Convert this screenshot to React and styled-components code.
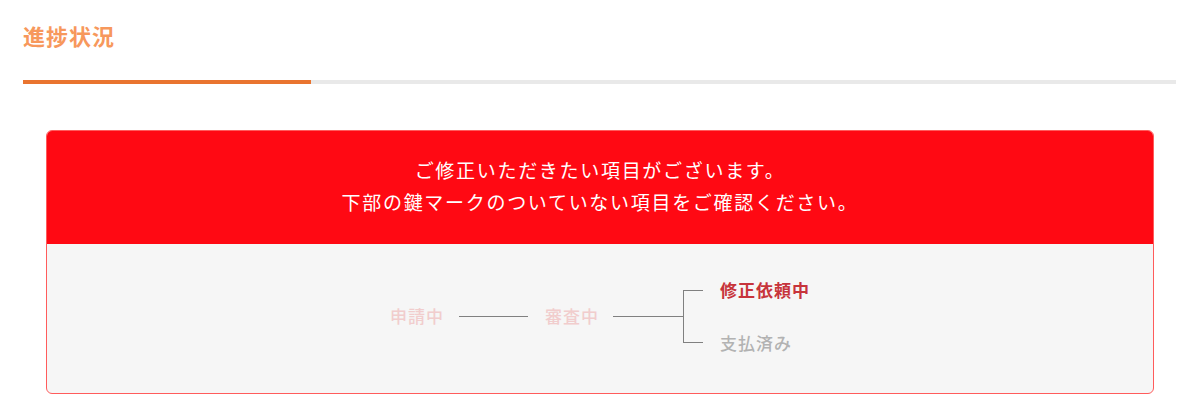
import React from 'react';
import styled, { createGlobalStyle } from 'styled-components';

const GlobalStyle = createGlobalStyle`
  html, body {
    margin: 0;
    padding: 0;
    background: #fff;
    font-family: "Noto Sans CJK JP", "Noto Sans", sans-serif;
  }
`;

const Page = styled.div`
  padding: 20px 24px 12px 23px;
`;

const Title = styled.h2`
  margin: 0;
  font-size: 22px;
  line-height: 30px;
  font-weight: 700;
  letter-spacing: 1px;
  color: #f7985c;
`;

const Track = styled.div`
  margin-top: 30px;
  height: 4px;
  background: #e9e9e9;
`;

const Fill = styled.div`
  height: 100%;
  background: #e9742f;
`;

const Card = styled.section`
  margin: 46px 22px 0 23px;
  border: 1px solid #ff5c5c;
  border-radius: 6px;
  overflow: hidden;
  background: #f6f6f6;
`;

const Alert = styled.div`
  background: #ff0913;
  color: #fff;
  text-align: center;
  padding: 23px 0 26px;
  font-size: 19px;
  line-height: 32px;
  letter-spacing: 1.7px;
`;

const Flow = styled.div`
  height: 149px;
  display: flex;
  align-items: center;
  justify-content: center;
  padding-bottom: 5px;
  box-sizing: border-box;
`;

const Step = styled.span`
  font-size: 17px;
  line-height: 26px;
  letter-spacing: 1px;
  font-weight: ${p => (p.current ? 700 : 500)};
  color: ${p => p.color};
  white-space: nowrap;
`;

const Connector = styled.div`
  width: ${p => p.width}px;
  height: 1px;
  background: #808080;
  margin: 0 ${p => p.after}px 0 ${p => p.before}px;
`;

const Fork = styled.div`
  width: 19px;
  height: 51px;
  border: 1px solid #808080;
  border-right: none;
  margin-right: 17px;
`;

const Outcomes = styled.div`
  display: flex;
  flex-direction: column;
  gap: 27px;
`;

const steps = {
  done: '#f1cdcd',
  current: '#c7343b',
  idle: '#b2b2b2',
};

export default function App() {
  const progress = 25;
  return (
    <Page>
      <GlobalStyle />
      <Title>進捗状況</Title>
      <Track>
        <Fill style={{ width: `${progress}%` }} />
      </Track>
      <Card>
        <Alert>
          ご修正いただきたい項目がございます。
          <br />
          下部の鍵マークのついていない項目をご確認ください。
        </Alert>
        <Flow>
          <Step color={steps.done}>申請中</Step>
          <Connector width={69} before={15} after={17} />
          <Step color={steps.done}>審査中</Step>
          <Connector width={70} before={14} after={0} />
          <Fork />
          <Outcomes>
            <Step current color={steps.current}>修正依頼中</Step>
            <Step color={steps.idle}>支払済み</Step>
          </Outcomes>
        </Flow>
      </Card>
    </Page>
  );
}
